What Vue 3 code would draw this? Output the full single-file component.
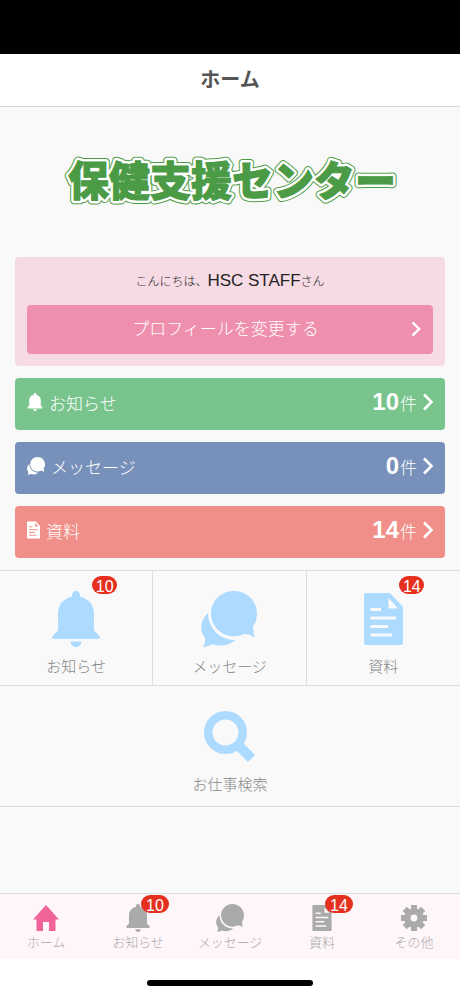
<script setup>
const summaries = [
  { label: 'お知らせ', icon: 'bell', box: '0 0 48 56', count: 10, tone: 'green' },
  { label: 'メッセージ', icon: 'chat', box: '0 0 56 56', count: 0, tone: 'blue' },
  { label: '資料', icon: 'doc', box: '0 0 39 52', count: 14, tone: 'red' },
]

const tiles = [
  { label: 'お知らせ', icon: 'bell', box: '0 0 48 56', badge: 10 },
  { label: 'メッセージ', icon: 'chat', box: '0 0 56 56' },
  { label: '資料', icon: 'doc', box: '0 0 39 52', badge: 14 },
  { label: 'お仕事検索', icon: 'search', box: '0 0 52 52', wide: true },
]

const tabs = [
  { label: 'ホーム', icon: 'home', box: '0 0 26 26', active: true },
  { label: 'お知らせ', icon: 'bell', box: '0 0 48 56', badge: 10 },
  { label: 'メッセージ', icon: 'chat', box: '0 0 56 56' },
  { label: '資料', icon: 'doc', box: '0 0 39 52', badge: 14 },
  { label: 'その他', icon: 'gear', box: '0 0 26 26' },
]
</script>

<template>
  <div class="screen">
    <svg class="sprite" aria-hidden="true">
      <symbol id="bell" viewBox="0 0 48 56">
        <path d="M24 0c2.300 0 4 1.700 4 4v1.400C36.500 7.300 42 14 42 22v17.500l5.300 5.200c1.300 1.400.600 3.300-1.300 3.300H2c-1.900 0-2.600-1.900-1.300-3.300L6 39.500V22C6 14 11.500 7.300 20 5.400V4c0-2.300 1.700-4 4-4Z" />
        <path d="M18.500 50.500h11c0 3.200-2.500 5.500-5.500 5.500s-5.500-2.300-5.500-5.500Z" />
      </symbol>
      <symbol id="chat" viewBox="0 0 56 56">
        <path d="M33 0c12.700 0 23 10.100 23 22.500 0 5-1.300 9.300-4 13 .2 4.500.8 8 1.800 11.200-3.500-2.700-7.300-4-10.800-3.700-3 1.500-6.500 2.300-10 2.300-12.700 0-23-10.200-23-22.800S20.300 0 33 0Z" />
        <path d="M7 22C2.500 26.200.3 31 .3 36.500c0 4 1.400 7.600 3.900 10.500.3 3.200-.4 6-2.200 9 3.500-.3 6.500-1.500 9.500-2.800C20 56 28 54.500 34.500 49A26.500 26.500 0 0 1 7 22Z" />
      </symbol>
      <symbol id="doc" viewBox="0 0 39 52">
        <path fill-rule="evenodd" d="M2 0h24l13 14v36a2 2 0 0 1-2 2H2a2 2 0 0 1-2-2V2a2 2 0 0 1 2-2ZM24.500 5v10.500h9.500ZM6.500 15v3h10.500v-3ZM6.500 23.500v3h25.500v-3ZM6.500 32v3h17.500v-3ZM6.500 40.500v3h21.500v-3Z" />
      </symbol>
      <symbol id="search" viewBox="0 0 52 52">
        <circle cx="21.500" cy="21.500" r="17.200" fill="none" stroke="currentColor" stroke-width="8.400" />
        <path d="m33 33 14.500 14.500" fill="none" stroke="currentColor" stroke-width="10" />
      </symbol>
      <symbol id="home" viewBox="0 0 26 26">
        <path d="M13 0 26 14.500h-3.500V26H16v-9h-6v9H3.500V14.500H0Z" />
      </symbol>
      <symbol id="gear" viewBox="0 0 26 26">
        <g fill="none" stroke="currentColor">
          <circle cx="13" cy="13" r="6.600" stroke-width="6.400" />
          <path stroke-width="6" d="M13 0v4.500M13 21.500V26M0 13h4.500M21.500 13H26M3.800 3.800l3.200 3.200M19 19l3.200 3.200M3.800 22.200 7 19M19 7l3.200-3.200" />
        </g>
      </symbol>
      <symbol id="chevron" viewBox="0 0 12 18">
        <path d="m2 1.500 7.500 7.500L2 16.500" fill="none" stroke="currentColor" stroke-width="2.600" />
      </symbol>
    </svg>

    <div class="status"></div>
    <header class="header"><h1>ホーム</h1></header>

    <main class="main">
      <div class="brand">
        <svg class="logo" viewBox="0 0 340 60" role="img" aria-label="保健支援センター">
          <g class="logo-text" text-anchor="middle">
            <text class="rim" x="172" y="44">保健支援センター</text>
            <text class="gap" x="172" y="44">保健支援センター</text>
            <text class="face" x="172" y="44">保健支援センター</text>
          </g>
        </svg>
      </div>

      <div class="panels">
        <section class="profile">
          <p class="greeting">こんにちは、<span>HSC STAFF</span>さん</p>
          <button class="edit" type="button">
            プロフィールを変更する
            <svg class="chevron small"><use href="#chevron" /></svg>
          </button>
        </section>

        <a v-for="s in summaries" :key="s.icon" href="#" class="summary" :class="s.tone">
          <svg class="summary-icon" :class="s.icon" :viewBox="s.box"><use :href="'#' + s.icon" /></svg>
          <span class="summary-label">{{ s.label }}</span>
          <span class="count"><b>{{ s.count }}</b>件</span>
          <svg class="chevron"><use href="#chevron" /></svg>
        </a>
      </div>

      <div class="tiles">
        <a v-for="t in tiles" :key="t.icon" href="#" class="tile" :class="{ wide: t.wide }">
          <span class="tile-art">
            <svg :class="t.icon" :viewBox="t.box"><use :href="'#' + t.icon" /></svg>
            <span v-if="t.badge" class="badge">{{ t.badge }}</span>
          </span>
          <span>{{ t.label }}</span>
        </a>
      </div>
    </main>

    <nav class="tabs">
      <a v-for="t in tabs" :key="t.icon" href="#" class="tab" :class="{ active: t.active }">
        <span class="tab-art">
          <svg :class="t.icon" :viewBox="t.box"><use :href="'#' + t.icon" /></svg>
          <span v-if="t.badge" class="badge">{{ t.badge }}</span>
        </span>
        <span>{{ t.label }}</span>
      </a>
    </nav>
    <div class="home-bar"><span></span></div>
  </div>
</template>

<style>
body {
  margin: 0;
}
</style>

<style scoped>
.screen {
  display: flex;
  flex-direction: column;
  min-height: 100vh;
  background: #f9f9f9;
  font-family: "Liberation Sans", "Noto Sans CJK JP", sans-serif;
  font-weight: 300;
}
.screen * {
  box-sizing: border-box;
}
a {
  color: inherit;
  text-decoration: none;
}
svg {
  display: block;
  fill: currentColor;
}
.sprite {
  position: absolute;
  width: 0;
  height: 0;
}
.status {
  height: 54px;
  background: #000;
}
.header {
  display: flex;
  align-items: center;
  justify-content: center;
  height: 53px;
  background: #fff;
  border-bottom: 1px solid #d8d8d8;
}
h1 {
  margin: 0;
  color: #555;
  font-size: 20px;
  font-weight: 700;
  line-height: 24px;
}
.main {
  flex: 1;
}
.brand {
  display: flex;
  align-items: center;
  justify-content: center;
  height: 150px;
}
.logo {
  width: 340px;
  height: 60px;
  overflow: visible;
}
.logo-text {
  font-family: "Noto Sans CJK JP", sans-serif;
  font-size: 41px;
  font-weight: 900;
  stroke-linejoin: round;
}
.rim {
  fill: #4b9a45;
  stroke: #4b9a45;
  stroke-width: 8px;
}
.gap {
  fill: #fff;
  stroke: #fff;
  stroke-width: 6px;
}
.face {
  fill: #4b9a45;
  stroke: #4b9a45;
  stroke-width: 1px;
}
.panels {
  display: flex;
  flex-direction: column;
  gap: 12px;
  padding: 0 15px 12px;
}
.profile {
  padding: 12px;
  border-radius: 4px;
  background: #f6dae4;
}
.greeting {
  margin: 0 0 11px;
  color: #222;
  font-size: 12px;
  line-height: 24px;
  text-align: center;
}
.greeting span {
  font-size: 17px;
}
.edit {
  position: relative;
  display: block;
  width: 100%;
  height: 49px;
  padding: 0 21px 4px 12px;
  border: 0;
  border-radius: 4px;
  background: #ef8fae;
  color: #fff;
  font: inherit;
  font-size: 17px;
}
.chevron {
  width: 12px;
  height: 18px;
}
.chevron.small {
  position: absolute;
  top: 16px;
  right: 11px;
  height: 16px;
}
.summary {
  display: flex;
  align-items: center;
  height: 52px;
  padding: 0 11px 3px 12px;
  border-radius: 4px;
  color: #fff;
  font-size: 17px;
}
.green {
  background: #78c48c;
}
.blue {
  background: #7891bb;
}
.red {
  background: #f08f89;
}
.summary-icon {
  height: 18px;
  margin-bottom: 2px;
}
.summary-icon.bell {
  width: 16px;
}
.summary-icon.chat {
  width: 18px;
}
.summary-icon.doc {
  width: 13px;
}
.summary-label {
  flex: 1;
  padding-left: 6px;
}
.count b {
  margin-right: 1px;
  font-size: 24px;
  font-weight: 700;
  line-height: 24px;
}
.summary .chevron {
  margin: 0 0 2px 5px;
}
.tiles {
  display: grid;
  grid-template-columns: repeat(3, 1fr);
  border-top: 1px solid #dcdcdc;
}
.tile {
  display: flex;
  flex-direction: column;
  align-items: center;
  gap: 9px;
  height: 115px;
  padding-top: 20px;
  border-right: 1px solid #dcdcdc;
  border-bottom: 1px solid #dcdcdc;
  color: #888;
  font-size: 15px;
  line-height: 22px;
}
.tile:nth-child(3) {
  border-right: 0;
}
.tile.wide {
  grid-column: 1 / -1;
  height: 121px;
  padding-top: 23px;
  border-right: 0;
}
.tile-art {
  position: relative;
  display: flex;
  align-items: center;
  height: 56px;
  color: #addaff;
}
.tile-art .bell {
  width: 48px;
  height: 56px;
}
.tile-art .chat {
  width: 56px;
  height: 56px;
}
.tile-art .doc {
  width: 39px;
  height: 52px;
}
.tile-art .search {
  width: 52px;
  height: 52px;
}
.badge {
  position: absolute;
  top: -15px;
  left: calc(50% + 16px);
  min-width: 25px;
  height: 18px;
  border-radius: 9px;
  background: #e5301f;
  color: #fff;
  font-size: 16px;
  line-height: 22px;
  text-align: center;
}
.tabs {
  display: grid;
  grid-template-columns: repeat(5, 1fr);
  height: 66px;
  padding-top: 9px;
  border-top: 1px solid #dcdcdc;
  background: #fff6f9;
}
.tab {
  display: flex;
  flex-direction: column;
  align-items: center;
  gap: 1px;
  color: #aaa;
  font-size: 13px;
  line-height: 20px;
  white-space: nowrap;
}
.tab-art {
  position: relative;
  display: flex;
  align-items: center;
  height: 29px;
}
.tab-art svg {
  height: 26px;
}
.active .tab-art {
  color: #f0649a;
}
.tab-art .home,
.tab-art .gear {
  width: 26px;
}
.tab-art .bell {
  width: 24px;
  height: 28px;
}
.tab-art .chat {
  width: 28px;
  height: 28px;
}
.tab-art .doc {
  width: 20px;
}
.tab-art .badge {
  top: -8px;
  left: calc(50% + 3px);
  min-width: 28px;
}
.home-bar {
  display: flex;
  justify-content: center;
  height: 37px;
  padding-top: 21px;
  background: #fff;
}
.home-bar span {
  width: 36%;
  height: 6px;
  border-radius: 3px;
  background: #000;
}
</style>
